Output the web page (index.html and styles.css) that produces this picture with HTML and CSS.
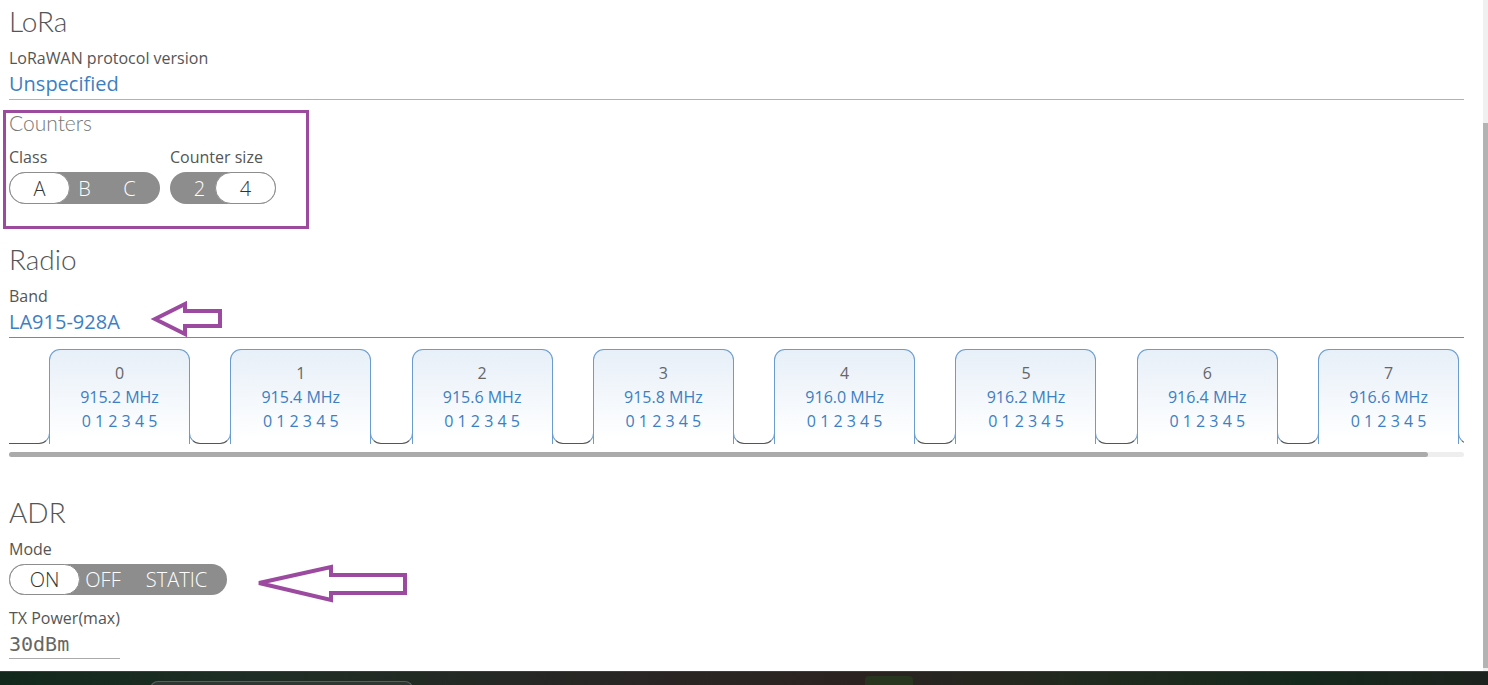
FILE: index.html
```html
<!DOCTYPE html>
<html>
<head>
<meta charset="utf-8">
<link rel="stylesheet" href="styles.css">
</head>
<body>
<div class="app">
  <div class="viewport">
    <div class="page">
      <h2 class="title">LoRa</h2>
      <div class="label">LoRaWAN protocol version</div>
      <div class="value">Unspecified</div>

      <div class="counters">
        <div class="subtitle">Counters</div>
        <div class="counter-row">
          <div class="col">
            <div class="label">Class</div>
            <div class="seg">
              <span class="opt on w61">A</span>
              <span class="opt w29">B</span>
              <span class="opt w61">C</span>
            </div>
          </div>
          <div class="col">
            <div class="label">Counter size</div>
            <div class="seg">
              <span class="opt w45 shift">2</span>
              <span class="opt on w61">4</span>
            </div>
          </div>
        </div>
      </div>

      <h2 class="title t-radio">Radio</h2>
      <div class="label lbl-band">Band</div>
      <div class="value blue-line">LA915-928A</div>

      <div class="strip">
        <div class="tabs">
          <span class="lead"></span>
          <div class="tab"><div class="num">0</div><div>915.2 MHz</div><div>0 1 2 3 4 5</div></div>
          <span class="gap"></span>
          <div class="tab"><div class="num">1</div><div>915.4 MHz</div><div>0 1 2 3 4 5</div></div>
          <span class="gap"></span>
          <div class="tab"><div class="num">2</div><div>915.6 MHz</div><div>0 1 2 3 4 5</div></div>
          <span class="gap"></span>
          <div class="tab"><div class="num">3</div><div>915.8 MHz</div><div>0 1 2 3 4 5</div></div>
          <span class="gap"></span>
          <div class="tab"><div class="num">4</div><div>916.0 MHz</div><div>0 1 2 3 4 5</div></div>
          <span class="gap"></span>
          <div class="tab"><div class="num">5</div><div>916.2 MHz</div><div>0 1 2 3 4 5</div></div>
          <span class="gap"></span>
          <div class="tab"><div class="num">6</div><div>916.4 MHz</div><div>0 1 2 3 4 5</div></div>
          <span class="gap"></span>
          <div class="tab"><div class="num">7</div><div>916.6 MHz</div><div>0 1 2 3 4 5</div></div>
          <span class="gap"></span>
        </div>
      </div>
      <div class="hscroll"><div class="hthumb"></div></div>

      <h2 class="title t-adr">ADR</h2>
      <div class="label lbl-mode">Mode</div>
      <div class="seg seg-adr">
        <span class="opt on w71">ON</span>
        <span class="opt w46">OFF</span>
        <span class="opt w101">STATIC</span>
      </div>
      <div class="label lbl-tx">TX Power(max)</div>
      <div class="mono">30dBm</div>

      <svg class="arrow arrow-band" width="80" height="40" viewBox="150 300 80 40">
        <polygon points="155,319 185,304 185,311 220,311 220,326 185,326 185,334" fill="none" stroke="#9b4aa0" stroke-width="4" stroke-linejoin="miter"/>
      </svg>
      <svg class="arrow arrow-adr" width="160" height="46" viewBox="250 560 160 46">
        <polygon points="259,583 331,567 331,575 405,575 405,593 331,593 331,600" fill="none" stroke="#9b4aa0" stroke-width="4" stroke-linejoin="miter"/>
      </svg>
    </div>
    <div class="vscroll"><div class="vthumb"></div></div>
  </div>
  <div class="taskbar">
    <span class="tb-search"></span>
    <span class="tb-icon"></span>
  </div>
</div>
</body>
</html>
```

FILE: styles.css
```css
* { box-sizing: border-box; }
html, body { margin: 0; padding: 0; background: #fff; }
body { font-family: "Open Sans", "Liberation Sans", sans-serif; color: #555; }

.app { width: 1488px; height: 685px; display: flex; flex-direction: column; overflow: hidden; }
.viewport { height: 671px; display: flex; overflow: hidden; }
.page { position: relative; flex: 1; padding-left: 9px; padding-right: 19px; overflow: hidden; }

.title {
  margin: 6px 0 0;
  font-family: Lato, "Open Sans", sans-serif;
  font-weight: 300;
  font-size: 28px;
  line-height: 30px;
  color: #555;
}
.t-radio { margin-top: 15px; }
.t-adr { margin-top: 40px; }

.label { font-size: 16px; line-height: 20px; color: #555; margin-top: 12px; }
.value {
  margin-top: 3px;
  font-size: 20px;
  line-height: 26px;
  color: #3c7fc2;
  padding-bottom: 2px;
  border-bottom: 1px solid #b2b2b2;
}
.value.blue-line { border-bottom-color: #5a8fc8; }

.counters {
  margin: 10px 0 0 -6px;
  width: 306px;
  height: 119px;
  border: 3px solid #9b4a9e;
  padding-left: 3px;
}
.subtitle {
  font-family: Lato, "Open Sans", sans-serif;
  font-weight: 300;
  font-size: 21px;
  line-height: 20px;
  color: #777;
}
.counter-row { display: flex; gap: 10px; }
.counter-row .label { margin-top: 14px; }

.seg {
  display: inline-flex;
  margin-top: 5px;
  height: 32px;
  background: #8d8d8d;
  border-radius: 16px;
  font-family: "Open Sans", sans-serif;
  font-weight: 300;
  font-size: 20px;
  color: #fff;
}
.opt { display: flex; align-items: center; justify-content: center; height: 100%; }
.opt.on { background: #fff; color: #333; border: 1px solid #8d8d8d; border-radius: 16px; }
.opt.shift { padding-left: 14px; }
.w29 { width: 29px; }
.w45 { width: 45px; }
.w46 { width: 46px; }
.w61 { width: 61px; }
.w71 { width: 71px; }
.w101 { width: 101px; }
.seg-adr { display: flex; width: 218px; height: 31px; }

.strip { margin-top: 11px; width: 1455px; overflow: hidden; }
.tabs { display: flex; align-items: flex-end; width: max-content; height: 95px; }
.lead {
  width: 41px; height: 12px;
  border-bottom: 1px solid #555;
  border-right: 1px solid #6b9ccf;
  border-bottom-right-radius: 11px;
  margin-right: -1px;
}
.gap {
  width: 42.3px; height: 12px;
  margin: 0 -1px;
  border: 1px solid #555;
  border-top: none;
  border-left-color: #6b9ccf;
  border-right-color: #6b9ccf;
  border-radius: 0 0 11px 11px;
}
.tab {
  width: 141px; height: 95px;
  border: 1px solid #6b9ccf;
  border-bottom: none;
  border-radius: 11px 11px 0 0;
  background: linear-gradient(#e7eff8, #ffffff 95%);
  padding-top: 11px;
  text-align: center;
  font-size: 16px;
  line-height: 24px;
  color: #3c7fc2;
}
.tab .num { color: #666; }

.hscroll { margin-top: 8px; width: 1455px; height: 5px; background: #eee; border-radius: 3px; }
.hthumb { width: 1419px; height: 5px; background: #ababab; border-radius: 3px; }

.lbl-mode { margin-top: 12px; }
.lbl-tx { margin-top: 13px; }
.mono {
  margin-top: 3px;
  width: 111px;
  font-family: "DejaVu Sans Mono", "Liberation Mono", monospace;
  font-size: 20px;
  line-height: 26px;
  color: #666;
  padding-bottom: 1px;
  border-bottom: 1px solid #aaa;
}

.arrow { position: absolute; }
.arrow-band { left: 150px; top: 300px; }
.arrow-adr { left: 250px; top: 560px; }

.vscroll { width: 5px; height: 671px; background: #f0f0f0; }
.vthumb { margin-top: 123px; height: 545px; background: #b3b3b3; }

.taskbar {
  position: relative;
  height: 14px;
  border-top: 1px solid #3a3f3b;
  background: linear-gradient(90deg, #13281c 0%, #1d2e25 15%, #2a2524 45%, #2b2320 58%, #1f2a1d 75%, #15281c 88%, #1d221e 100%);
  display: flex;
  align-items: flex-start;
}
.tb-search {
  margin: 9px 0 0 150px;
  width: 263px; height: 10px;
  border: 1px solid #5a615d;
  border-bottom: none;
  border-radius: 8px 8px 0 0;
  background: #2f3733;
}
.tb-icon {
  margin: 4px 0 0 452px;
  width: 48px; height: 12px;
  border-radius: 4px 4px 0 0;
  background: #28351f;
}
```
